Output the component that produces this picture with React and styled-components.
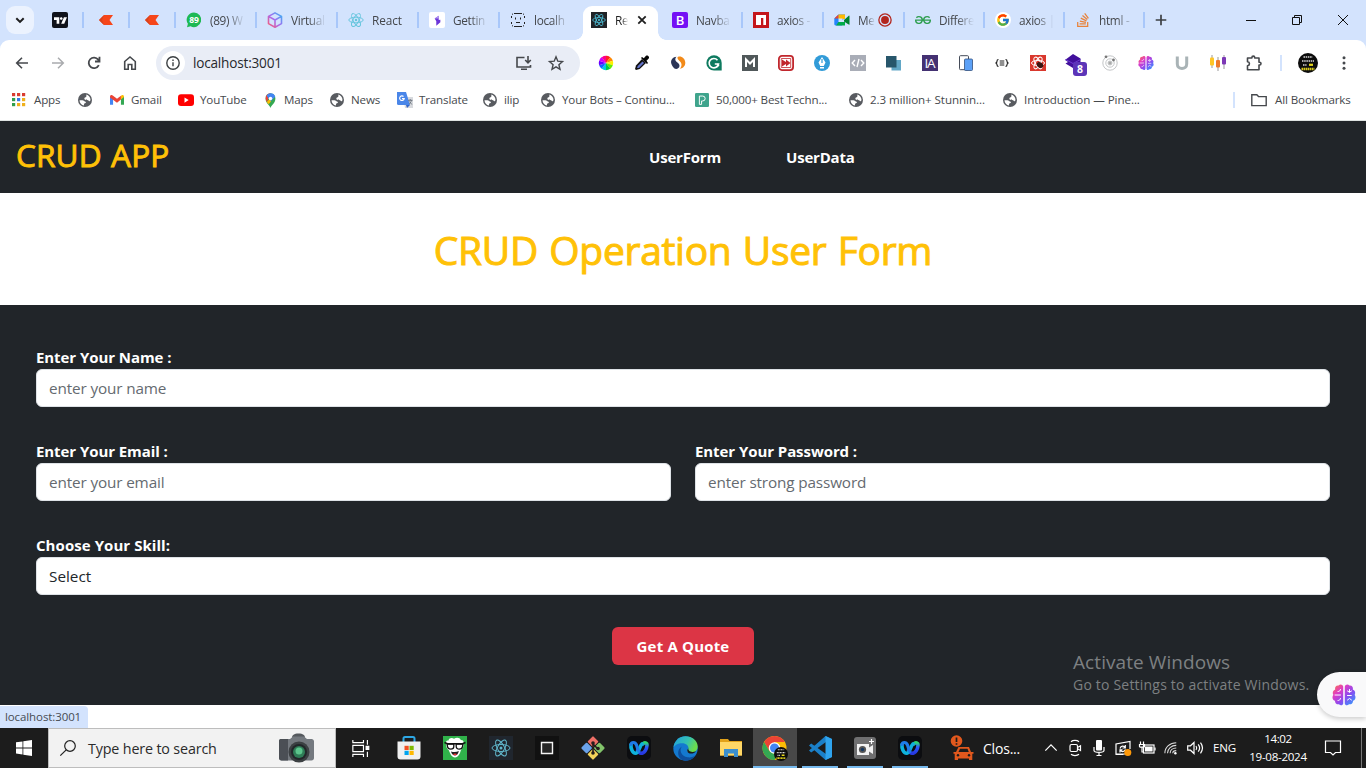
import React from 'react';
import styled, { createGlobalStyle, css } from 'styled-components';
import { SiTradingview, SiGeeksforgeeks } from 'react-icons/si';
import { FaStackOverflow } from 'react-icons/fa';
import { FcGoogle } from 'react-icons/fc';

const Global = createGlobalStyle`
  * { box-sizing: border-box; }
  html, body { margin: 0; overflow: hidden; }
  body { font-family: "Open Sans", "Noto Sans", sans-serif; color: #3c4043; }
`;

const Screen = styled.div`
  position: relative; width: 1366px; height: 768px; overflow: hidden;
  display: flex; flex-direction: column; background: #fff;
`;
const Txt = styled.span`
  white-space: nowrap; letter-spacing: ${p => p.$ls || 0}px;
`;
const Svg = styled.svg`
  display: block; flex: none; overflow: visible;
  width: ${p => p.$w || p.$s || 16}px; height: ${p => p.$s || 16}px;
`;
const Ic = ({ s = 16, w, v = 16, vw, children, ...r }) => (
  <Svg $s={s} $w={w} viewBox={`0 0 ${vw || v} ${v}`} fill="none" {...r}>{children}</Svg>
);

/* ---------- tab strip ---------- */
const TabStrip = styled.header`
  height: 40px; flex: none; background: #d3e3fd; display: flex; align-items: center;
`;
const TabSearch = styled.button`
  width: 28px; height: 28px; margin: 0 10px 0 6px; border: 0; padding: 0; border-radius: 9px;
  background: #ebf2fe; display: flex; align-items: center; justify-content: center;
`;
const Tab = styled.div`
  width: ${p => p.$w || 81}px; height: 40px; flex: none; display: flex; align-items: center;
  padding-left: ${p => p.$pad ?? 10}px; position: relative; font-size: 11.8px; color: #44474b;
  ${p => p.$sep && css`
    &::after { content: ""; position: absolute; right: 0; top: 12px; width: 2px; height: 16px; background: #a8c7fa; }
  `}
`;
const TabTitle = styled.span`
  width: ${p => p.$w || 35}px; margin-left: 8px; overflow: hidden; white-space: nowrap; letter-spacing: ${p => p.$ls ?? -0.3}px;
  flex: none;
  mask-image: linear-gradient(90deg, #000 ${p => (p.$full ? 100 : 50)}%, transparent 100%);
`;
const CloseMark = styled.div`margin-left: 6px; display: flex;`;
const RecMark = styled.div`margin-left: 3px; display: flex;`;
const ActiveTab = styled(Tab)`
  color: #1f1f1f;
  &::before {
    content: ""; position: absolute; left: 2px; top: 6px; width: 75px; height: 34px;
    background: #fff; border-radius: 9px 9px 0 0;
  }
  > * { position: relative; }
`;
const Foot = styled.i`
  && { position: absolute; bottom: 0; width: 8px; height: 8px; ${p => p.$side}: ${p => p.$off}px; }
  background: radial-gradient(circle at ${p => (p.$side === 'left' ? '0' : '100%')} 0, transparent 7.5px, #fff 8px);
`;
const NewTab = styled.div`width: 31px; display: flex; justify-content: center;`;
const WindowControls = styled.div`margin-left: auto; display: flex; height: 40px;`;
const WinButton = styled.div`width: 46px; display: flex; align-items: center; justify-content: center;`;

/* ---------- toolbar ---------- */
const Chrome = styled.div`background: #d3e3fd; flex: none;`;
const Toolbar = styled.div`
  height: 46px; background: #fff; border-radius: 9px 9px 0 0; display: flex; align-items: center; padding-left: 4px;
`;
const Slot = styled.div`
  width: ${p => p.$w || 36}px; height: 36px; flex: none; display: flex; align-items: center; justify-content: center;
  position: relative;
`;
const BadgedSlot = styled(Slot)`padding: 4px 0 0 4px;`;
const Omnibox = styled.div`
  width: 424px; height: 34px; margin: 0 8px 0 8px; border-radius: 17px; background: #e9edf6;
  display: flex; align-items: center; padding: 0 8px 0 5px; flex: none;
`;
const InfoDisc = styled.div`
  width: 24px; height: 24px; border-radius: 50%; background: #fff; display: flex; align-items: center; justify-content: center;
`;
const Url = styled(Txt)`font-size: 13.6px; color: #27292d; margin-left: 8px; flex: 1; padding-bottom: 1px;`;
const OmniIcon = styled.div`width: 32px; display: flex; justify-content: center;`;
const Tile = styled.div`
  width: 16px; height: 16px; background: ${p => p.$bg}; border-radius: ${p => p.$r || 0}px; flex: none;
  display: flex; align-items: center; justify-content: center; color: #fff; overflow: hidden;
`;
const Divider = styled.div`width: 2px; height: 16px; background: #d3e3fd; flex: none; margin: ${p => p.$m || 0};`;

/* ---------- bookmarks ---------- */
const Bookmarks = styled.div`
  height: 35px; background: #fff; border-bottom: 1px solid #dfe4e2; padding: 0 0 6px 12px; display: flex; align-items: center;
`;
const Bookmark = styled.div`
  width: ${p => p.$w}px; flex: none; display: flex; align-items: center; gap: ${p => p.$gap || 7}px;
  font-size: 11.6px; line-height: 16px; color: #46494d;
`;
const BookmarkText = styled(Txt)`padding-bottom: 1px;`;
const IconBox = styled.div`width: 15px; flex: none; display: flex;`;

/* ---------- page ---------- */
const Page = styled.main`height: 607px; flex: none; background: #fff; position: relative;`;
const Navbar = styled.nav`
  height: 72px; background: #212529; display: flex; padding: 14px 16px 0;
`;
const Brand = styled.h2`
  margin: 0; width: 617px; font-size: 31.600px; line-height: 39px; font-weight: 400; color: #ffc107; letter-spacing: 0.1px; white-space: nowrap;
  word-spacing: 1px; -webkit-text-stroke: 0.9px #ffc107;
`;
const NavLink = styled.a`
  color: #fff; font-weight: 700; font-size: 15px; line-height: 24px; letter-spacing: -0.2px; margin: 10px 0 0 16px; width: ${p => p.$w}px; white-space: nowrap;
`;
const Heading = styled.h1`
  margin: 0; height: 112px; padding-top: 33px; text-align: center; color: #ffc107; font-size: 39px; line-height: 48px; font-weight: 400;
  letter-spacing: -0.3px; word-spacing: 1.500px; white-space: nowrap; -webkit-text-stroke: 1px #ffc107;
`;
const Form = styled.form`
  height: 400px; background: #212529; padding: 40px 36px; display: flex; flex-direction: column; gap: 32px;
`;
const FormRow = styled.div`display: grid; grid-template-columns: ${p => (p.$two ? '1fr 1fr' : '1fr')}; gap: 24px;`;
const Field = styled.div`display: flex; flex-direction: column;`;
const FieldLabel = styled.label`
  color: #fff; font-weight: 700; font-size: 15px; line-height: 24px; letter-spacing: ${p => p.$ls ?? -0.07}px; white-space: nowrap;
`;
const Control = styled.div`
  height: 38px; border: 1px solid #dee2e6; border-radius: 6px; background: #fff; padding: 0 12px; line-height: 36px;
  font-size: 15.3px; color: ${p => (p.$value ? '#212529' : '#656a70')}; letter-spacing: ${p => (p.$value ? 0 : -0.14)}px;
`;
const Submit = styled.button`
  align-self: center; width: 142px; height: 38px; border: 0; border-radius: 6px; background: #dc3545; color: #fff;
  font: 700 15px/36px "Open Sans", "Noto Sans", sans-serif; letter-spacing: 0.18px; padding: 0;
`;
const Status = styled.div`
  position: absolute; left: 0; bottom: 0; width: 88px; height: 22px; background: #d3e3fd; border-radius: 0 4px 0 0;
  font-size: 11.5px; line-height: 22px; padding-left: 5px; color: #474b52; letter-spacing: -0.1px;
`;
const Watermark = styled.div`
  position: absolute; left: 1073px; top: 528px; color: #7d8082; display: flex; flex-direction: column;
`;
const MarkTitle = styled(Txt)`font-size: 19px; line-height: 26px; letter-spacing: 0.08px;`;
const MarkText = styled(Txt)`font-size: 14px; line-height: 19px; letter-spacing: 0.2px;`;
const BrainTab = styled.div`
  position: absolute; right: 0; top: 551px; width: 49px; height: 45px; background: #f9f9fa; border-radius: 23px 0 0 23px;
  box-shadow: 0 2px 5px #0003; display: flex; align-items: center; padding-left: 15px;
`;

/* ---------- taskbar ---------- */
const Taskbar = styled.footer`height: 40px; background: #1c1c1c; display: flex; flex: none; color: #fff;`;
const Start = styled.div`width: 48px; flex: none; display: flex; align-items: center; justify-content: center;`;
const SearchBox = styled.div`
  width: 288px; flex: none; background: #f2f2f2; border: 1px solid #bdbdbd; display: flex; align-items: center; padding: 0 21px 0 11px; color: #2b2b2b;
`;
const SearchText = styled(Txt)`font-size: 14.3px; flex: 1; margin-left: 12px;`;
const Task = styled.div`
  width: ${p => p.$w || 46}px; height: 40px; display: flex; align-items: center; justify-content: center; flex: none; position: relative;
  background: ${p => (p.$active ? '#484848' : 'none')};
  &::after { content: ""; display: ${p => (p.$open ? 'block' : 'none')}; position: absolute; bottom: 0; height: 2px; background: #76b9ed;
    left: ${p => (p.$active ? 0 : 5)}px; right: ${p => (p.$active ? 0 : 4)}px; }
`;
const News = styled.div`width: 89px; flex: none; margin-left: 18px; display: flex; align-items: center; gap: 7px; font-size: 14px;`;
const Tray = styled.div`width: 24px; flex: none; display: flex; align-items: center; justify-content: center;`;
const Lang = styled.div`font-size: 11.6px; width: 36px; flex: none; padding-left: 6px; line-height: 39px; letter-spacing: -0.2px;`;
const Clock = styled.div`
  width: 74px; flex: none; margin-left: -2px; text-align: center; font-size: 11.6px; line-height: 18px; padding-top: 2px; display: flex; flex-direction: column;
`;
const Notify = styled.div`
  width: 47px; flex: none; display: flex; align-items: center; justify-content: center; border-right: 1px solid #777; padding-right: 10px;
`;

/* ---------- icons ---------- */
const Atom = ({ s = 16, c = '#4fc3dc', sw = 0.9 }) => (
  <Ic s={s} stroke={c} strokeWidth={sw}>
    <ellipse cx="8" cy="8" rx="7.2" ry="2.8" />
    <ellipse cx="8" cy="8" rx="7.2" ry="2.8" transform="rotate(60 8 8)" />
    <ellipse cx="8" cy="8" rx="7.2" ry="2.8" transform="rotate(120 8 8)" />
    <circle cx="8" cy="8" r="1.2" fill={c} stroke="none" />
  </Ic>
);
const Kite = () => (
  <Ic><path d="M6 3h9l-3.500 5 3.500 5H6L1 8z" fill="#f6461a" /><path d="M6 3 4 8l2 5-5-5z" fill="#d8421c" /></Ic>
);
const Globe = () => (
  <Ic s={14} v={14}>
    <circle cx="7" cy="7" r="7" fill="#585b60" />
    <path d="M1.500 7.200h3c1.200 0 1.400 1 2.600 1.200 1.300.3 1 1.600-.2 1.800-.9.200-.9 1-.9 2.300-2.500-.4-4.400-2.400-4.500-5.300z" fill="#fff" />
    <path d="M8.300 1.600c2.300.6 4.200 2.700 4.200 5.400l-.6 1.200c-1 .2-1.300-.5-1.900-.9-.9-.5-2.500.1-3.300-.8-.8-1-.1-2 .9-2.200.8-.2.900-.8.700-2.700z" fill="#fff" />
  </Ic>
);
const Brain = ({ s = 16 }) => (
  <Ic s={s} v={24}>
    <defs><linearGradient id="brain" x1="0" y1="0" x2="1" y2="1">
      <stop offset="0" stopColor="#ff7a3c" /><stop offset=".3" stopColor="#e03cc4" /><stop offset=".6" stopColor="#8a4cf0" /><stop offset="1" stopColor="#24a6ff" />
    </linearGradient></defs>
    <path fill="url(#brain)" d="M11.200 3.500C10.800 1.500 8 .8 6.600 2.600 4 2.300 2.500 4.600 3.200 6.600.8 7.600.2 10 1.300 11.900-.3 14 .6 17 3 17.700c-.2 2.600 2 4 4 3.600 1.400 1.700 4 1.200 4.200-.8zM12.800 3.500c.4-2 3.200-2.700 4.600-.9 2.600-.3 4.100 2 3.400 4 2.400 1 3 3.400 1.900 5.300 1.600 2.100.7 5.100-1.700 5.800.2 2.600-2 4-4 3.600-1.400 1.700-4 1.200-4.200-.8z" />
    <path stroke="#fff" strokeWidth="1" strokeLinecap="round" d="M3 12h5.500M8.500 6.500c0 1.200-1.200 2-2.500 2M8.500 15.500c0 1.200-1.200 2-2.500 2M15.500 8l2 1.200 2-1.200M15.500 12.500h3.800M15.500 17l2-1.500 2 1.500M17.500 6.500v2.500" />
  </Ic>
);
const Caret = ({ c = '#1f1f1f' }) => <Ic s={16} stroke={c} strokeWidth="2"><path d="m4.300 6.200 3.700 3.700 3.700-3.700" /></Ic>;
const Webex = ({ s = 24 }) => (
  <Ic s={s} v={24}>
    <defs>
      <linearGradient id="wxRight" x1="0" y1="0" x2="0" y2="1"><stop stopColor="#2ed573" /><stop offset=".4" stopColor="#2b5cff" /><stop offset="1" stopColor="#2738e0" /></linearGradient>
    </defs>
    <rect width="24" height="24" rx="5" fill="#0c0d10" />
    <path d="M10.500 14.500c1 1.800 2 2.800 3.500 2.800 3.500 0 5.800-4.500 6-7.800.2-2.700-2.500-3.500-4-1.500" stroke="url(#wxRight)" strokeWidth="3.600" strokeLinecap="round" />
    <path d="M4 8.500c-.5 3.500 1.500 8.800 4.500 8.800 3.600 0 3.800-7.300 6.500-9.500" stroke="#0eb2dc" strokeWidth="3.600" strokeLinecap="round" />
    <path d="M4 8.500C4.500 6 8 5.500 9.500 9c.8 2 1 4.300 2.200 6.300" stroke="#1f7be8" strokeWidth="3.200" strokeLinecap="round" />
  </Ic>
);
const PuckArt = () => (
  <>
    <circle cx="10" cy="10" r="10" fill="#0c0c0c" />
    <path d="M5.500 4h9M4 8h12M5 12h3.500" stroke="#ddd" strokeWidth="1.600" strokeDasharray="1.500 .7" />
    <path d="M11 11.800h4" stroke="#e8d81c" strokeWidth="2.200" />
    <path d="M3.500 16h13" stroke="#d8ca1c" strokeWidth="2.600" strokeDasharray="1.600 .5" />
  </>
);
const Puck = ({ s = 20 }) => <Ic s={s} v={20}><PuckArt /></Ic>;

const tabs = [
  { w: 40, pad: 8, icon: <Tile $bg="#10131b" $r={2}><SiTradingview size={13} /></Tile> },
  { w: 46, pad: 14, icon: <Kite /> },
  { w: 46, pad: 14, icon: <Kite /> },
  { t: '(89) W', icon: <Ic><path d="M8 .5a7.300 7.300 0 1 1-3.400 13.800L1 15.300l.9-3.500A7.300 7.300 0 0 1 8 .5z" fill="#1db954" /><text x="8" y="11" fontSize="8.500" fontWeight="700" textAnchor="middle" fill="#fff">89</text></Ic> },
  { t: 'Virtual', icon: <Ic strokeWidth="1.600" strokeLinejoin="round"><defs><linearGradient id="cube" x1="1" y1="0" x2="0" y2="1"><stop stopColor="#34b6f3" /><stop offset=".5" stopColor="#a66bf0" /><stop offset="1" stopColor="#ff5a6e" /></linearGradient></defs><path stroke="url(#cube)" d="M8 .9 14.500 4.400v7.200L8 15.200 1.500 11.600V4.400zM1.500 4.400 8 8l6.500-3.600M8 8v7.200" /></Ic> },
  { t: 'React', full: true, ls: -0.1, icon: <Atom c="#62c4dc" /> },
  { t: 'Gettin', icon: <Tile $bg="#fff" $r={2}><Ic s={13}><path d="M4.500 5.500 9.500 2v5.500L11.500 7v3L6.500 14.500V9z" fill="#6b35d9" /><path d="M4.500 5.500 9.500 2v3.500z" fill="#b79af2" /></Ic></Tile> },
  { t: 'localh', nosep: true, icon: <Ic stroke="#222" strokeWidth="1"><path d="M4 1.500h8M4 14.500h8M1.500 4v2M14.500 4v2M1.500 10v2M14.500 10v2M5.500 5.500v2M10.500 5.500v2M6 10.500h4M2 2.500l1-.7M14 2.500l-1-.7M2 13.500l1 .7M14 13.500l-1 .7" /></Ic> },
  { t: 'Re', active: true },
  { t: 'Navba', icon: <Tile $bg="#7411f5" $r={2}><Ic s={16}><text x="8" y="12.500" fontSize="13" fontWeight="600" textAnchor="middle" fill="#fff">B</text></Ic></Tile> },
  { t: 'axios - ', icon: <Ic><path d="M0 0h16v16H0z" fill="#c4161c" /><path d="M3 3h10v10h-2.700V6H8v7H3z" fill="#fff" /></Ic> },
  { t: 'Me', tw: 17, rec: true, icon: <Ic><path d="M4.500 2.500H11v4L8 8v5.500H1.500A1.300 1.300 0 0 1 .3 12.300V6.500z" fill="#2684fc" /><path d="M4.500 2.500v4H.3z" fill="#ea4335" /><path d="M4.500 2.500H11V7H4.500z" fill="#ffba00" /><path d="M4.500 10H11v3.500H2z" fill="#00ac47" /><path d="M4.500 6.500h4v3.500h-4z" fill="#d3e3fd" /><path d="m10 8 4.800-4.300c.4-.2.7 0 .7.500v8c0 .5-.4.7-.8.400L10 9.500z" fill="#00832d" /></Ic> },
  { t: 'Differe', w: 80, icon: <SiGeeksforgeeks size={16} color="#2f9e50" /> },
  { t: 'axios |', w: 80, icon: <Tile $bg="#fff" $r={8}><FcGoogle size={14} /></Tile> },
  { t: 'html - ', w: 80, icon: <FaStackOverflow size={16} color="#e8823a" /> },
];

const gray = { stroke: '#45484c', strokeWidth: 1.6 };
const wheel = ['#f22', '#f80', '#fe0', '#6e0', '#0c4', '#0cd', '#16f', '#60f', '#c0f', '#f08'];
const badged = 13;
const extensions = [
  <Ic>{wheel.map((c, i) => <path key={c} fill={c} transform={`rotate(${i * 36} 8 8)`} d="M8 8V.8a7.200 7.200 0 0 1 4.300 1.400z" />)}</Ic>,
  <Ic><path d="m2 15-1-1 1-3.500L8 4l4 4-6.300 6z" fill="#111" /><path d="m3 13 .8-2L8.500 6.500 10 8l-5 5z" fill="#6273c9" /><path d="m7 3 1-1 1.800 1.200L12 .8c1.500-1.300 4 1 2.700 2.800l-2.200 2.200L14 8l-1 1z" fill="#050505" /></Ic>,
  <Ic><path d="M6.500 1.800C3 1.800.5 5 1.200 8.200c.5 2.300 2 3.800 3.300 5.300 1.500 1 5 .3 5-2.700C9.500 7.500 5.500 7.500 5.300 4.500c0-1 .5-2 1.200-2.700z" fill="#2b3557" /><path d="M7.500 2.500C7.300 5.500 11.300 6 11.500 9.500c.1 1.800-.7 3.300-1.700 4.200 3.500-.3 5.700-3.200 5.500-6.200C15 4 12.500 1.500 9.500 1.500c-1 0-1.800.4-2 1z" fill="#f28a19" /></Ic>,
  <Ic><path d="M8 .3a7.700 7.700 0 0 1 7.700 7.700v7.500H8A7.600 7.600 0 0 1 8 .3z" fill="#0e7a5f" /><path d="M11.500 5.200A4.700 4.700 0 1 0 12.500 9H8.800M11 8.500l1.800 2.800" stroke="#fff" strokeWidth="1.700" /></Ic>,
  <Tile $bg="#50585a"><Ic><path d="M4 12V4.500L8 8.500l4-4V12" stroke="#fff" strokeWidth="2" /></Ic></Tile>,
  <Ic><rect x=".9" y=".9" width="14.200" height="14.200" rx="3" fill="#fff" stroke="#c1272d" strokeWidth="1.800" /><path d="M4 4.500 8 7V4.500l4.500 3.500L8 11.500V9l-4 2.500z" fill="#c1272d" /><path d="M3.300 3.500h9.400v9H3.300z" stroke="#c1272d" strokeWidth=".8" /></Ic>,
  <Ic><circle cx="8" cy="8" r="8" fill="#319bd8" /><path d="m8 2 3.500 5.500L9.800 11H6.200L4.500 7.500zM6 12h4v1.600H6z" fill="#fff" /><path d="M8 4v4" stroke="#319bd8" strokeWidth="1.200" /></Ic>,
  <Tile $bg="#a9adb7"><Ic stroke="#fff" strokeWidth="1.400"><path d="M5 5 2.200 8 5 11M11 5l2.800 3L11 11M9 4l-2 8" /></Ic></Tile>,
  <Ic><path d="M5.500 5H15v10.500H5.500z" fill="#62a7c6" /><path d="M0 1h10.500v11.500H0z" fill="#27566b" /></Ic>,
  <Tile $bg="#443172"><Ic><text x="8" y="13" fontSize="13.500" textAnchor="middle" fill="#fff" textLength="11">IA</text></Ic></Tile>,
  <Ic><rect x="1.500" y=".7" width="9" height="14" rx="1" stroke="#444b58" /><rect x="6.500" y="4" width="8" height="11.500" rx="1" fill="#5ca1f7" stroke="#33517d" strokeWidth=".8" /></Ic>,
  <Ic stroke="#222" strokeWidth="1.200"><path d="M4.500 4.500C3 4.500 3 5 3 6.200S2.700 7.800 1.500 8C2.700 8.200 3 8.800 3 9.800s0 1.700 1.500 1.700M11.500 4.500c1.500 0 1.500.5 1.500 1.700s.3 1.600 1.500 1.800c-1.200.2-1.500.8-1.500 1.800s0 1.700-1.500 1.700M5.700 6h4.600M5.700 8h4.600M5.700 10h4.600" /></Ic>,
  <Tile $bg="#d9382d"><Ic stroke="#fff" strokeWidth="1"><ellipse cx="8" cy="8" rx="6.500" ry="2.600" /><ellipse cx="8" cy="8" rx="6.500" ry="2.600" transform="rotate(60 8 8)" /><ellipse cx="8" cy="8" rx="6.500" ry="2.600" transform="rotate(120 8 8)" /><ellipse cx="10" cy="10" rx="3.500" ry="2.600" transform="rotate(35 10 10)" fill="#3a1512" stroke="none" /></Ic></Tile>,
  <Svg $s={22} $w={22} viewBox="0 0 22 22"><path d="m8 0 7.500 4.500v5.500L8 14 .5 9.500 3 8 0 6z" fill="#41109c" /><path d="m.5 5.500 7.500 4 7.500-4" stroke="#6d3bd3" fill="none" /><rect x="8" y="8" width="14" height="14" rx="3" fill="#5c35b8" /><text x="15" y="18.800" fontSize="10.500" fontWeight="700" textAnchor="middle" fill="#fff">8</text></Svg>,
  <Ic stroke="#c4c6c8"><circle cx="8" cy="8" r="7.200" /><circle cx="8" cy="8" r="4.200" /><circle cx="8" cy="8" r="2" fill="#aaa" /><circle cx="4" cy="1.800" r="1.400" fill="#777" stroke="none" /><circle cx="11.500" cy="5" r="1.400" fill="#777" stroke="none" /></Ic>,
  <Brain />,
  <Ic><path d="M3.300 1.500V9c0 6 9.400 6 9.400 0V1.500" stroke="#a9b3b6" strokeWidth="3" /></Ic>,
  <Ic><path d="M2 0v13M8 2v14M14 0v14" stroke="#999" strokeWidth="1" /><rect y="2.500" width="4" height="8" rx="1" fill="#ffc525" /><rect x="6" y="5" width="4" height="7.500" rx="1" fill="#ee7a2a" /><rect x="12" y="2" width="4" height="7.500" rx="1" fill="#7c38b6" /></Ic>,
  <Ic {...gray} strokeLinejoin="round"><path d="M1.500 3h4.400v-.5a1.400 1.400 0 0 1 2.800 0V3H13v4.200h.6a1.400 1.400 0 0 1 0 2.800H13v4.700H1.500v-4c2.600-.3 2.600-3.600 0-3.900z" /></Ic>,
];

const appColors = ['#d93c30', '#d93c30', '#d93c30', '#2f9d4c', '#3577e5', '#efb01c', '#2f9d4c', '#efb01c', '#efb01c'];
const bookmarks = [
  { w: 66, t: 'Apps', icon: <Ic s={14} v={14}>{appColors.map((c, i) => <rect key={i} x={(i % 3) * 5} y={Math.floor(i / 3) * 5} width="3.200" height="3.200" fill={c} />)}</Ic> },
  { w: 32, icon: <Globe /> },
  { w: 68, t: 'Gmail', gap: 6, icon: <Ic s={14}><path d="M0 4v9.500h3.500V6.500z" fill="#4285f4" /><path d="M16 4v9.500h-3.500V6.500z" fill="#34a853" /><path d="M0 4.500C0 2 2 1.800 3.500 3L8 6.500 12.500 3v4.500L8 11 0 5z" fill="#ea4335" /><path d="M12.500 3C14 1.800 16 2 16 4.500l-3.500 3z" fill="#fbbc04" /></Ic> },
  { w: 85, t: 'YouTube', icon: <Ic><rect y="2.300" width="16" height="11.600" rx="3" fill="#f00" /><path d="m6.500 5.500 4.200 2.600-4.200 2.600z" fill="#fff" /></Ic> },
  { w: 67, t: 'Maps', gap: 6, icon: <Ic s={15}><path d="M8 16c-.7-3.200-5.200-5-5.200-10A5.200 5.200 0 0 1 8 .3a5.200 5.200 0 0 1 5.200 5.500C13.200 11 8.700 12.800 8 16z" fill="#34a853" /><path d="M2.800 6A5.200 5.200 0 0 1 8 .3L4.200 9.500A7 7 0 0 1 2.800 6z" fill="#ea4335" /><path d="M8 .3a5.200 5.200 0 0 1 5 3.700L8 9 4 3C5 1 6.500.3 8 .3z" fill="#4285f4" /><path d="m4 9.500 3-3L8.500 9 6 12z" fill="#fbbc04" /><circle cx="8" cy="5.800" r="1.900" fill="#fff" /></Ic> },
  { w: 67, t: 'News', gap: 6, icon: <Globe /> },
  { w: 86, t: 'Translate', icon: <Ic><path d="M6 5h10v11H8z" fill="#d8dade" /><path d="M0 0h9l4 13H1.500A1.500 1.500 0 0 1 0 11.500z" fill="#4a86e8" /><path d="m9 13 4 0-3 3z" fill="#3265c8" /><path d="M6.500 4.500a2.300 2.300 0 1 0 .7 2.200H5" stroke="#fff" strokeWidth="1.200" /><path d="M11 8.300h4.500M13.200 7v1.300M14.500 8.300c-.5 2-1.500 3-2.300 3.700M12.500 9.500l2.300 3" stroke="#68707a" strokeWidth=".9" /></Ic> },
  { w: 58, t: 'ilip', gap: 6, icon: <Globe /> },
  { w: 154, t: 'Your Bots – Continu...', gap: 6, ls: -0.15, icon: <Globe /> },
  { w: 154, t: '50,000+ Best Techn...', gap: 6, ls: -0.15, icon: <Ic s={14}><rect width="16" height="16" rx="1.500" fill="#3fa48c" /><path d="M5 3.500h3.800a2.800 2.800 0 0 1 0 5.600H7.500V13H5z" stroke="#fff" strokeWidth="1.100" /></Ic> },
  { w: 154, t: '2.3 million+ Stunnin...', gap: 6, ls: -0.07, icon: <Globe /> },
  { w: 231, t: 'Introduction — Pine...', gap: 6, ls: -0.07, icon: <Globe /> },
];

const DarkTile = styled.div`width: 24px; height: 24px; background: #20262e; display: flex; align-items: center; justify-content: center;`;

const tasks = [
  { w: 49, icon: <Ic s={17} stroke="#fff" strokeWidth="1.100"><path d="M.8 0v2.500h10V0M.8 16v-2.500h10V16M.8 5h10v6H.8zM14.500 0v4.500M14.500 11v5" /><path d="M13.300 6h2.500v2.800h-2.500z" fill="#fff" /></Ic> },
  { w: 47, icon: <Ic s={24} v={24}><path d="M6.500 6V2.500c0-1 .5-1.500 1.500-1.500h8c1 0 1.500.5 1.500 1.500V6" stroke="#2da7e4" strokeWidth="2" /><path d="M.5 5.500h23v15a3 3 0 0 1-3 3h-17a3 3 0 0 1-3-3z" fill="#f0f0f0" /><path d="M7.500 9.800h4.200V14H7.500z" fill="#f25022" /><path d="M12.500 9.800h4.200V14h-4.200z" fill="#7fba00" /><path d="M7.500 14.800h4.200V19H7.500z" fill="#00a4ef" /><path d="M12.500 14.800h4.200V19h-4.200z" fill="#ffb900" /></Ic> },
  { w: 46, icon: <Ic s={24} v={24}><path d="M0 0h24v24H0z" fill="#30b24a" /><path d="M3 7.500C2.500 5 4 4.500 5.500 4.500 6 1.500 9.500 1.500 11 2.800c2.500-2 6-1.300 6.800 1.200C20.500 4 21 5.500 20.500 7.500c.7 3-1 4.500-2.500 6.500-1 3.500-2.700 7.500-6 7.500S7 17.500 6 14.500C4 13 2.800 10.500 3 7.500z" fill="#fff" /><path d="m1.500 6.500 3 1.200h15l3-1.200" stroke="#111" strokeWidth="1.400" /><path d="M4 8h6.800v2.500c0 3.500-5.800 3.500-6.300 0zM13.200 8H20l-.5 2.500c-.5 3.500-6.300 3.500-6.300 0z" stroke="#111" strokeWidth="1.300" /><path d="M8 15.500c2.500.8 5.500.8 7.800-.4-.5 3.200-2.200 4.400-3.800 4.400s-3.500-1.500-4-4z" fill="#222" /><path d="M10 18.300c1-1 3-1 4 0-1 1.300-3 1.300-4 0z" fill="#e33" /></Ic> },
  { w: 46, icon: <DarkTile><Atom s={20} c="#61b7cc" sw={0.8} /></DarkTile> },
  { w: 46, icon: <Ic s={24} v={24}><path d="M0 0h24v24H0z" fill="#111" /><path d="M6.500 6.500h11v11h-11z" stroke="#f4f4f4" strokeWidth="1.400" fill="#262626" /></Ic> },
  { w: 46, icon: <Ic s={24} v={24}><g transform="rotate(45 12 12)"><rect x="3.500" y="3.500" width="8" height="8" rx="1" fill="#ee6f66" /><rect x="12.500" y="3.500" width="8" height="8" rx="1" fill="#82c46a" /><rect x="3.500" y="12.500" width="8" height="8" rx="1" fill="#6aa2ea" /><rect x="12.500" y="12.500" width="8" height="8" rx="1" fill="#f4d35a" /></g><path d="M12 6v12M12 8l5 5" stroke="#241c1c" strokeWidth="1.600" /><circle cx="12" cy="7" r="1.800" fill="#241c1c" /><circle cx="12" cy="17" r="1.800" fill="#241c1c" /><circle cx="17" cy="12.500" r="1.800" fill="#241c1c" /></Ic> },
  { w: 46, icon: <Webex /> },
  { w: 46, icon: <Ic s={25} v={24}><defs><linearGradient id="ed" x1="0" y1="0" x2="1" y2=".4"><stop stopColor="#1f9fdf" /><stop offset=".6" stopColor="#35c1b1" /><stop offset="1" stopColor="#6bdc4c" /></linearGradient></defs><circle cx="12" cy="12" r="11.700" fill="#1479cf" /><path d="M.5 11C1.500 4 6.500.3 12 .3c6.500 0 11.700 4.500 11.700 9.700 0 4-3.200 6-6.200 6-2.500 0-3.700-.8-3.700-1.600 0-.7 1-1.300 1-3 0-2-2-4.400-6-4.400C4.500 7 1.500 9 .5 11z" fill="url(#ed)" /><path d="M8.500 10c-2.800 3.500-.5 9.500 5.500 10.500 3 .5 6-.5 7.500-2-2 4-7 6-11 5C4 22 3 13 8.500 10z" fill="#0d4f9d" /><path d="M13.800 14.400c-.7-1 1-1.500.8-3.500-.5 4 3 5.500 7.500 3.800-2 3-8 3-8.300-.3z" fill="#1c1c1c" /></Ic> },
  { w: 45, icon: <Ic s={22} v={22}><path d="M0 2h8l1.500 2H22v14.500H0z" fill="#e2a21a" /><path d="M0 5h22v13.500H0z" fill="#ffd766" /><path d="M4 20v-8h14v8h-4v-3.500H8V20z" fill="#3c8fce" /></Ic> },
  { w: 44, active: true, open: true, icon: <Ic s={26} v={26}><circle cx="12.500" cy="13" r="12" fill="#fbbc05" /><path d="M2.100 7a12 12 0 0 1 20.800 0H12.500L7.300 16z" fill="#ea4335" /><path d="M2.100 7a12 12 0 0 0 10.400 18l5.200-9-5.200 3-5.200-3z" fill="#34a853" /><circle cx="12.500" cy="13" r="5.800" fill="#fff" /><circle cx="12.500" cy="13" r="4.500" fill="#4285f4" /><svg x="12" y="12" width="14" height="14" viewBox="0 0 20 20"><PuckArt /></svg></Ic> },
  { w: 45, open: true, icon: <Ic s={24} v={24}><path d="M17.500 0 24 3v18l-6.500 3L1 9.500 3.200 7.500 18 18V6L3.200 16.500 1 14.500z" fill="#1b80c9" /><path d="M17.500 0 24 3v18l-6.500 3z" fill="#2fa4ee" /></Ic> },
  { w: 45, open: true, icon: <Ic s={22} v={22}><rect width="22" height="22" rx="3" fill="#6f6f70" /><path d="M3 7h12v3.500l4-2.500v9l-4-2.500V18H3z" fill="#f2f2f2" /><circle cx="8.500" cy="12.500" r="3.600" fill="#555" /><circle cx="8.500" cy="12.500" r="1.700" fill="#15375f" /><path d="M17.500 2v5M15 4.500h5" stroke="#fff" strokeWidth="1.200" /></Ic> },
  { w: 45, open: true, icon: <Webex /> },
];

function BrowserTab({ tab }) {
  if (tab.active) {
    return (
      <ActiveTab>
        <Foot $side="left" $off={-6} /><Foot $side="right" $off={-4} />
        <Tile $bg="#202327"><Atom s={14} /></Tile>
        <TabTitle $w={13}>{tab.t}</TabTitle>
        <CloseMark><Ic s={16} stroke="#1f1f1f" strokeWidth="1.800"><path d="m4.300 4.300 7.400 7.400M11.700 4.300l-7.400 7.400" /></Ic></CloseMark>
      </ActiveTab>
    );
  }
  return (
    <Tab $w={tab.w} $pad={tab.pad} $sep={!tab.nosep}>
      {tab.icon}
      {tab.t && <TabTitle $w={tab.tw} $full={tab.full} $ls={tab.ls}>{tab.t}</TabTitle>}
      {tab.rec && <RecMark><Ic s={14}><circle cx="8" cy="8" r="7" stroke="#b3261e" strokeWidth="1.500" /><circle cx="8" cy="8" r="4.500" fill="#b3261e" /></Ic></RecMark>}
    </Tab>
  );
}

export default function App() {
  return (
    <Screen>
      <Global />
      <TabStrip>
        <TabSearch><Caret /></TabSearch>
        {tabs.map((t, i) => <BrowserTab key={i} tab={t} />)}
        <NewTab><Ic s={16} stroke="#3c4043" strokeWidth="1.700"><path d="M8 2.700v10.600M2.700 8h10.600" /></Ic></NewTab>
        <WindowControls>
          <WinButton><Ic s={10} v={10} stroke="#111"><path d="M0 5.500h10" /></Ic></WinButton>
          <WinButton><Ic s={10} v={10} stroke="#111"><path d="M.5 2.500h7v7h-7zM2.500 2.500v-2h7v7h-2" /></Ic></WinButton>
          <WinButton><Ic s={10} v={10} stroke="#111"><path d="m0 0 10 10M10 0 0 10" /></Ic></WinButton>
        </WindowControls>
      </TabStrip>
      <Chrome>
        <Toolbar>
          <Slot><Ic {...gray}><path d="M14 8H3M8 2.700 2.700 8 8 13.300" /></Ic></Slot>
          <Slot><Ic stroke="#a9abae" strokeWidth="1.500"><path d="M2 8h11M8 2.700 13.300 8 8 13.300" /></Ic></Slot>
          <Slot><Ic {...gray} strokeWidth="1.800"><path d="M12.800 10.200a5.300 5.300 0 1 1-.6-5.600l1.200 1.200M13.500 1.800v4.700H9" /></Ic></Slot>
          <Slot><Ic {...gray}><path d="M2.700 6.500 8 2l5.300 4.500v7.700H9.800V9.500H6.200v4.700H2.700z" /></Ic></Slot>
          <Omnibox>
            <InfoDisc><Ic stroke="#3c4043" strokeWidth="1.400"><circle cx="8" cy="8" r="6.200" /><path d="M8 7.300v4M8 4.500v1.500" /></Ic></InfoDisc>
            <Url $ls={-0.2}>localhost:3001</Url>
            <OmniIcon><Ic {...gray}><path d="M8.500 2.500H1v9.500h13.500v-2M5 14.200h6M12 1v6.500M9.200 5 12 7.800 14.800 5" /></Ic></OmniIcon>
            <OmniIcon><Ic {...gray} strokeWidth="1.400"><path d="m8 1.800 1.800 4.400 4.700.4-3.600 3.100 1.100 4.600L8 11.800l-4 2.500 1.100-4.600L1.500 6.600l4.700-.4z" /></Ic></OmniIcon>
          </Omnibox>
          {extensions.map((e, i) => (i === badged ? <BadgedSlot key={i}>{e}</BadgedSlot> : <Slot key={i}>{e}</Slot>))}
          <Divider $m="0 8px" />
          <Slot><Puck /></Slot>
          <Slot><Ic fill="#45484c"><circle cx="8" cy="2.700" r="1.500" /><circle cx="8" cy="8" r="1.500" /><circle cx="8" cy="13.300" r="1.500" /></Ic></Slot>
        </Toolbar>
        <Bookmarks>
          {bookmarks.map((b, i) => (
            <Bookmark key={i} $w={b.w} $gap={b.gap}>
              <IconBox>{b.icon}</IconBox>
              {b.t && <BookmarkText $ls={b.ls ?? -0.15}>{b.t}</BookmarkText>}
            </Bookmark>
          ))}
          <Divider $m="0 16px 0 -1px" />
          <Bookmark $w={105} $gap={8}>
            <Ic {...gray} strokeWidth="1.400"><path d="M.8 2.800h5l1.700 1.800h7.700v9H.8z" /></Ic><BookmarkText $ls={-0.12}>All Bookmarks</BookmarkText>
          </Bookmark>
        </Bookmarks>
      </Chrome>
      <Page>
        <Navbar>
          <Brand>CRUD APP</Brand>
          <NavLink $w={121}>UserForm</NavLink>
          <NavLink>UserData</NavLink>
        </Navbar>
        <Heading>CRUD Operation User Form</Heading>
        <Form>
          <FormRow><Field><FieldLabel>Enter Your Name :</FieldLabel><Control>enter your name</Control></Field></FormRow>
          <FormRow $two>
            <Field><FieldLabel>Enter Your Email :</FieldLabel><Control>enter your email</Control></Field>
            <Field><FieldLabel>Enter Your Password :</FieldLabel><Control>enter strong password</Control></Field>
          </FormRow>
          <FormRow><Field><FieldLabel $ls={0.06}>Choose Your Skill:</FieldLabel><Control $value>Select</Control></Field></FormRow>
          <Submit type="button">Get A Quote</Submit>
        </Form>
        <Status>localhost:3001</Status>
        <Watermark>
          <MarkTitle>Activate Windows</MarkTitle>
          <MarkText>Go to Settings to activate Windows.</MarkText>
        </Watermark>
        <BrainTab><Brain s={24} /></BrainTab>
      </Page>
      <Taskbar>
        <Start><Ic><path fill="#fff" d="M0 2.300 6.500 1.400v6.100H0zM7.300 1.300 16 0v7.500H7.300zM0 8.400h6.500v6.100L0 13.600zM7.300 8.400H16V16l-8.700-1.300z" /></Ic></Start>
        <SearchBox>
          <Ic stroke="#222" strokeWidth="1.200"><circle cx="10" cy="6" r="5.300" /><path d="M6.200 9.800.3 15.700" /></Ic>
          <SearchText $ls={-0.15}>Type here to search</SearchText>
          <Ic s={30} w={36} v={30} vw={36}>
            <path d="M14 5c0-3 2-4.500 6.500-4.500S27 2 27 5z" fill="#55595e" />
            <path d="M1 8c0-1.500 1-2 2.500-2H12l3-2.500h11L29 6h4.500C35 6 36 7 36 8.500V25c0 1.500-1 2.500-2.500 2.500h-30C2 27.500 1 26.500 1 25z" fill="#74797f" />
            <path d="M1 8c0-1.500 1-2 2.500-2H10v21.500H3.500C2 27.500 1 26.500 1 25z" fill="#4b4f55" />
            <circle cx="21" cy="19" r="10.500" fill="#3c4043" /><circle cx="21" cy="19" r="8" fill="#22272a" /><circle cx="21" cy="19" r="6" fill="#2f7d57" /><circle cx="21" cy="18" r="3.500" fill="#5cc48c" />
          </Ic>
        </SearchBox>
        {tasks.map((t, i) => <Task key={i} $w={t.w} $active={t.active} $open={t.open}>{t.icon}</Task>)}
        <News>
          <Ic s={26} v={26}>
            <circle cx="6.500" cy="6" r="5.800" fill="#e2581d" /><path d="M6.500 2.500v4.500M6.500 8.200v1.500" stroke="#1c1c1c" strokeWidth="1.700" />
            <path d="M8.500 12h10.500l2 5h2.500v1.800h-1.200V25h-3.300v-1.500H8V25H4.700v-6.200H3.500V17H6z" fill="#e2581d" /><path d="M10 13.800h7.500l1.300 3.200H8.500z" fill="#1c1c1c" /><circle cx="8" cy="20.300" r="1.200" fill="#1c1c1c" /><circle cx="19" cy="20.300" r="1.200" fill="#1c1c1c" />
          </Ic>
          <Txt $ls={-0.2}>Clos...</Txt>
        </News>
        <Tray><Ic s={14} stroke="#fff" strokeWidth="1.400"><path d="m1.500 11 6.500-6.500L14.500 11" /></Ic></Tray>
        <Tray><Ic stroke="#fff" strokeWidth="1.200"><rect x="3" y="4.500" width="7.500" height="7" rx="1.500" /><path d="m10.500 7.500 3-1.700v4.700l-3-1.700M4 1.700C6 0 10 0 12 1.700M4 14.300c2 1.700 6 1.700 8 0" /></Ic></Tray>
        <Tray><Ic stroke="#fff" strokeWidth="1.200"><rect x="5" y="0" width="6" height="10.500" rx="1" fill="#fff" stroke="none" /><path d="M3 7v3.500c0 2.500 10 2.500 10 0V7M8 12.500v3M5.500 15.500h5" /></Ic></Tray>
        <Tray><Ic stroke="#fff" strokeWidth="1.200"><path d="M11 14H1V4l14-2.500V9M.5 14.500h8M5 8.500C6 5.500 9 5.500 10 7.500M10.300 5v3H7.500M10.500 9.500c-1.500 3-4 2.500-5 .8M5 12.500V9.800h2.500" /><circle cx="12.800" cy="12.500" r="3.500" fill="#ff9a0a" stroke="none" /></Ic></Tray>
        <Tray><Ic stroke="#fff" strokeWidth="1.200"><rect x="4.500" y="5" width="10.500" height="8" /><path d="M6.500 7h6.500v4H6.500z" fill="#fff" /><path d="M1.500 1.500v3M4.500 1.500v3M.5 4.500h5v2c0 1-5 1-5 0zM3 7v5h2M16 7.500v3" /></Ic></Tray>
        <Tray><Ic s={14} stroke="#ddd" strokeWidth="1.200"><path d="M1 14C1 7 7 2 14 2M4 14c0-5 4.500-9 10-9M7 14c0-3.500 3-6 7-6M10 14c0-2 1.500-3 4-3" /><circle cx="13" cy="14" r="1.400" fill="#fff" stroke="none" /></Ic></Tray>
        <Tray><Ic stroke="#fff" strokeWidth="1.200"><path d="M.7 5.800h2.800L7 2.500v11l-3.500-3.300H.7zM9 6c1 1.300 1 2.700 0 4M11.200 4.300c1.800 2.300 1.800 5 0 7.400M13.500 2.700c2.500 3.300 2.500 7.200 0 10.600" /></Ic></Tray>
        <Lang>ENG</Lang>
        <Clock><Txt $ls={-0.4}>14:02</Txt><Txt $ls={-0.3}>19-08-2024</Txt></Clock>
        <Notify><Ic stroke="#fff" strokeWidth="1.200"><path d="M.5 1h15v11.500h-5L8 15l-2.500-2.500h-5z" /></Ic></Notify>
      </Taskbar>
    </Screen>
  );
}
